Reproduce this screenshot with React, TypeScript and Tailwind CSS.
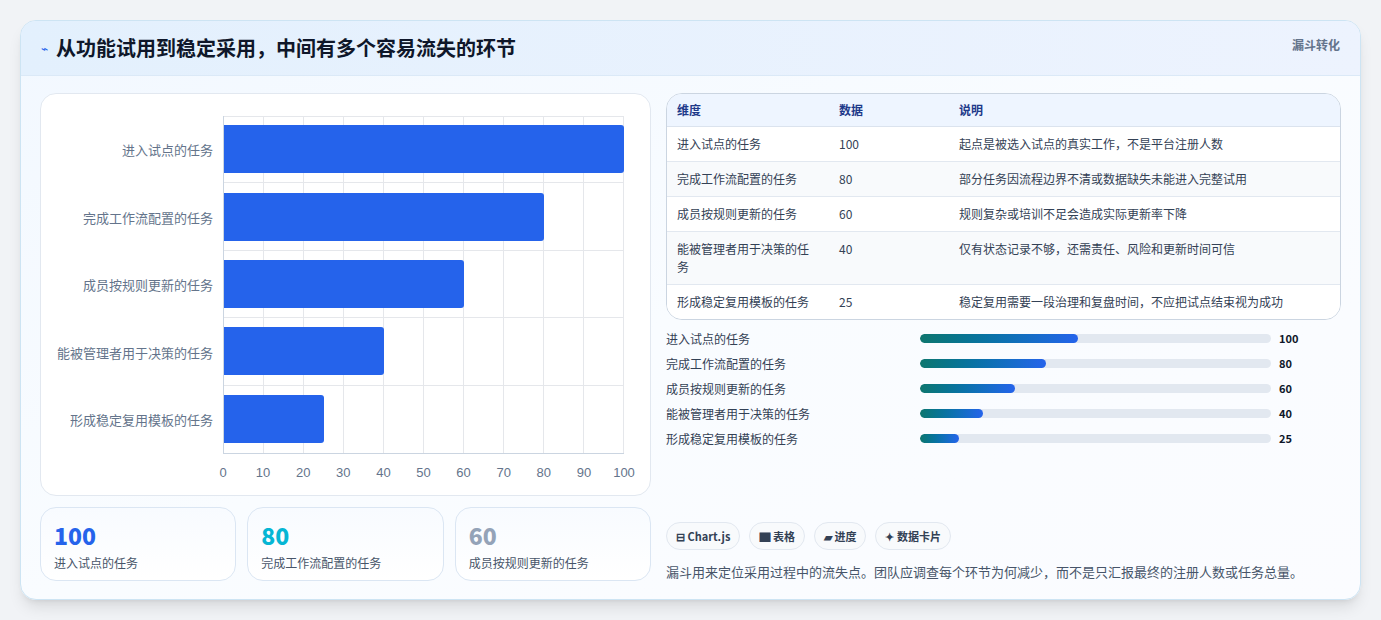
import React from 'react';

const rows = [
  { name: '进入试点的任务', value: 100, note: '起点是被选入试点的真实工作，不是平台注册人数' },
  { name: '完成工作流配置的任务', value: 80, note: '部分任务因流程边界不清或数据缺失未能进入完整试用' },
  { name: '成员按规则更新的任务', value: 60, note: '规则复杂或培训不足会造成实际更新率下降' },
  { name: '能被管理者用于决策的任务', value: 40, note: '仅有状态记录不够，还需责任、风险和更新时间可信' },
  { name: '形成稳定复用模板的任务', value: 25, note: '稳定复用需要一段治理和复盘时间，不应把试点结束视为成功' },
];

const ticks = [0, 10, 20, 30, 40, 50, 60, 70, 80, 90, 100];

function BarChart() {
  return (
    <div className="h-[403px] rounded-2xl border border-[#e2e8f0] bg-white pl-[14px] pr-[26px] pt-[22px]">
      <div className="flex">
        <div className="w-[168px] flex flex-col">
          {rows.map((r) => (
            <div key={r.name} className="h-[67.6px] flex items-center justify-end pr-[10px] text-[13px] text-[#64748b]">
              {r.name}
            </div>
          ))}
        </div>
        <div className="flex-1 relative h-[338px] border-l border-b border-[#cbd5e1]">
          <div className="absolute inset-0 flex">
            {ticks.slice(1).map((t) => (
              <div key={t} className="flex-1 border-r border-t border-[#e5e7eb]" />
            ))}
          </div>
          <div className="absolute inset-0 flex flex-col">
            {rows.map((r, i) => (
              <div key={r.name} className={`h-[67.6px] flex items-center ${i < 4 ? 'border-b border-[#e5e7eb]' : ''}`}>
                <div className="h-[48px] bg-[#2563eb] rounded-r-[3px]" style={{ width: `${r.value}%` }} />
              </div>
            ))}
          </div>
        </div>
      </div>
      <div className="ml-[168px] relative h-[30px]">
        {ticks.map((t) => (
          <span
            key={t}
            className="absolute top-[9px] -translate-x-1/2 text-[13px] text-[#64748b]"
            style={{ left: `${t}%`, fontFamily: '"Liberation Sans", sans-serif' }}
          >
            {t}
          </span>
        ))}
      </div>
    </div>
  );
}

function Stat({ value, label, color }: { value: number; label: string; color: string }) {
  return (
    <div className="flex-1 h-[74px] rounded-2xl border border-[#dbe6f3] bg-gradient-to-b from-[#f8fbff] to-white px-[13px] pt-[14px]">
      <div className={`text-[23px] leading-[26px] font-extrabold ${color}`}>{value}</div>
      <div className="mt-[6px] text-[12px] text-[#475569]">{label}</div>
    </div>
  );
}

export default function App() {
  return (
    <div
      className="min-h-[620px] bg-[#f1f3f6] px-[20px] pt-[20px]"
      style={{ fontFamily: '"Noto Sans CJK SC", "Noto Sans", sans-serif' }}
    >
      <div className="w-[1341px] h-[580px] rounded-2xl border border-[#cde4f3] bg-gradient-to-br from-[#f2f8ff] via-[#f9fcff] to-[#fbfcff] shadow-lg overflow-hidden">
        <div className="h-[55px] flex items-center justify-between bg-gradient-to-r from-[#e3f0fd] to-[#edf3fe] border-b border-[#dbe9f7] pl-[20px] pr-[20px]">
          <div className="flex items-center gap-[8px]">
            <span className="text-[#2563eb] text-[12px]">⌁</span>
            <span className="text-[20px] font-bold text-[#0f172a]">从功能试用到稳定采用，中间有多个容易流失的环节</span>
          </div>
          <span className="self-start mt-[15px] text-[12px] font-bold text-[#64748b]">漏斗转化</span>
        </div>
        <div className="flex gap-[15px] px-[19px] pt-[17px]">
          <div className="w-[611px] flex flex-col gap-[11px]">
            <BarChart />
            <div className="flex gap-[11px]">
              <Stat value={100} label="进入试点的任务" color="text-[#2563eb]" />
              <Stat value={80} label="完成工作流配置的任务" color="text-[#06b6d4]" />
              <Stat value={60} label="成员按规则更新的任务" color="text-[#94a3b8]" />
            </div>
          </div>
          <div className="flex-1 flex flex-col">
            <div className="rounded-2xl border border-[#cbd5e1] bg-white overflow-hidden text-[12px] text-[#334155]">
              <div className="grid grid-cols-[162px_120px_1fr] h-[33px] items-center px-[10px] bg-[#eef5ff] border-b border-[#dbe3ee] font-bold text-[#1e3a8a]">
                <span>维度</span>
                <span>数据</span>
                <span>说明</span>
              </div>
              {rows.map((r, i) => (
                <div
                  key={r.name}
                  className={`grid grid-cols-[162px_120px_1fr] px-[10px] py-[8px] ${i % 2 ? 'bg-[#f8fafc]' : 'bg-white'} ${i < 4 ? 'border-b border-[#e2e8f0]' : ''}`}
                >
                  <span className="leading-[18px] pr-[22px]">{r.name}</span>
                  <span className="leading-[18px]">{r.value}</span>
                  <span className="leading-[18px]">{r.note}</span>
                </div>
              ))}
            </div>
            <div className="mt-[9px] flex flex-col gap-[6px]">
              {rows.map((r) => (
                <div key={r.name} className="flex items-center h-[19px] text-[12px]">
                  <span className="w-[254px] text-[#334155]">{r.name}</span>
                  <div className="w-[351px] h-[9px] rounded-full bg-[#e2e8f0] overflow-hidden">
                    <div
                      className="h-full rounded-full bg-gradient-to-r from-[#0f766e] to-[#2563eb]"
                      style={{ width: `${r.value * 0.45}%` }}
                    />
                  </div>
                  <span className="ml-[8px] font-bold text-[#0f172a] text-[11px]">{r.value}</span>
                </div>
              ))}
            </div>
            <div className="mt-[74px] flex gap-[9px] text-[11px] font-bold text-[#334155]">
              {['⊟ Chart.js', '▇ 表格', '▰ 进度', '✦ 数据卡片'].map((c) => (
                <span key={c} className="h-[28px] px-[9px] flex items-center rounded-full border border-[#e2e8f0] bg-[#f8fafc]">
                  {c}
                </span>
              ))}
            </div>
            <p className="mt-[12px] text-[13px] text-[#475569]">
              漏斗用来定位采用过程中的流失点。团队应调查每个环节为何减少，而不是只汇报最终的注册人数或任务总量。
            </p>
          </div>
        </div>
      </div>
    </div>
  );
}
